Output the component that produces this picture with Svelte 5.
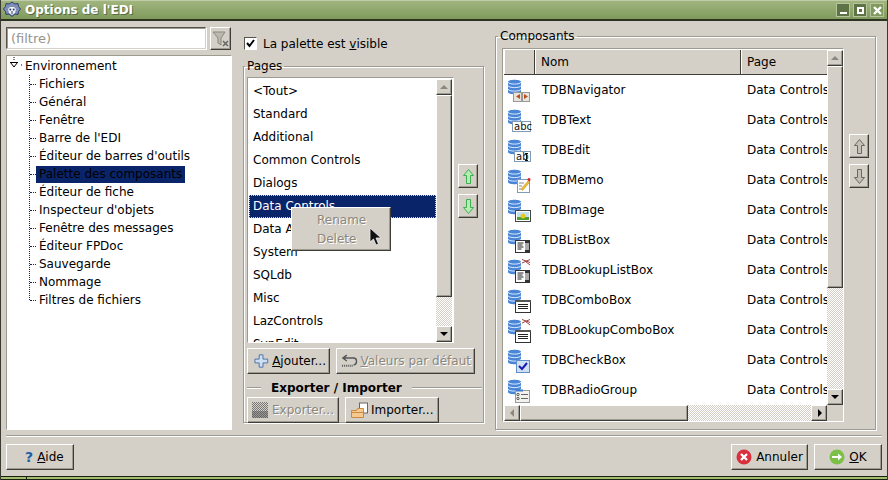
<script>
	const treeItems = [
		'Fichiers', 'Général', 'Fenêtre', "Barre de l'EDI", "Éditeur de barres d'outils",
		'Palette des composants', 'Éditeur de fiche', "Inspecteur d'objets",
		'Fenêtre des messages', 'Éditeur FPDoc', 'Sauvegarde', 'Nommage', 'Filtres de fichiers'
	];
	const selectedTree = 'Palette des composants';
	const pages = [
		'<Tout>', 'Standard', 'Additional', 'Common Controls', 'Dialogs', 'Data Controls',
		'Data Access', 'System', 'SQLdb', 'Misc', 'LazControls', 'SynEdit'
	];
	const components = [
		['TDBNavigator', 'nav'], ['TDBText', 'text'], ['TDBEdit', 'edit'], ['TDBMemo', 'memo'],
		['TDBImage', 'image'], ['TDBListBox', 'list'], ['TDBLookupListBox', 'lookuplist'],
		['TDBComboBox', 'combo'], ['TDBLookupComboBox', 'lookupcombo'], ['TDBCheckBox', 'check'],
		['TDBRadioGroup', 'radio']
	];
</script>

{#snippet arrow(dir, color, stroke)}
	<svg width="13" height="17" viewBox="0 0 13 17" class:flip={dir === 'down'}>
		<path d="M6.5 1.500 L11.500 7.500 H8.500 V15.500 H4.500 V7.500 H1.500 Z" fill={color} stroke={stroke} />
	</svg>
{/snippet}

{#snippet lines()}
	<rect x="6.500" y="12.500" width="15" height="12" fill="#fff" stroke="#333" />
	<path d="M6 12h16v2H6z" fill="#555" />
	<path d="M9 16.500h10M9 18.500h10M9 20.500h10" stroke="#222" />
{/snippet}

{#snippet lookup()}
	<path d="M13 1.500l8 3M13 5l8-3.500M16 3l5 4" stroke="#a04040" fill="none" />
{/snippet}

{#snippet dbIcon(kind)}
	<svg width="26" height="26" viewBox="0 0 26 26" class="cicon">
		<path d="M1 5c0-3 13-3 13 0v10c0 3-13 3-13 0z" fill="#4a86d8" />
		<path d="M1 5c0 2.800 13 2.800 13 0M1 8.500c0 2.800 13 2.800 13 0M1 12c0 2.800 13 2.800 13 0" stroke="#dfeaf8" fill="none" />
		<g transform="translate(2 1)">
			{#if kind === 'nav'}
				<rect x="4.500" y="14.500" width="8" height="9" fill="#e8e4dc" stroke="#999" />
				<rect x="13.500" y="14.500" width="7" height="9" fill="#e8e4dc" stroke="#999" />
				<path d="M11 16v5l-4-2.500z" fill="#b5521f" />
				<path d="M15 16v5l4-2.500z" fill="#b5521f" />
			{:else if kind === 'text'}
				<rect x="3.500" y="13.500" width="18" height="10" fill="#fff" stroke="#7f9bb8" />
				<text x="5" y="22" class="mini">abc</text>
			{:else if kind === 'edit'}
				<rect x="5.500" y="13.500" width="16" height="10" fill="#fff" stroke="#7f9bb8" />
				<text x="7" y="22" class="mini">ab</text>
				<path d="M16 15.500h3M17.500 15.500v7M16 22.500h3" stroke="#111" fill="none" />
			{:else if kind === 'memo'}
				<rect x="8.500" y="11.500" width="12" height="13" fill="#fff" stroke="#7f9bb8" />
				<path d="M10 15h5M10 18h3M10 21h2" stroke="#888" />
				<path d="M12 21l7-8 1.500 1.500-7 8z" fill="#f0c030" stroke="#a88020" stroke-width=".5" />
				<circle cx="20" cy="11.500" r="1.500" fill="#e02020" />
			{:else if kind === 'image'}
				<rect x="6.500" y="12.500" width="15" height="11" fill="#fff" stroke="#444" />
				<rect x="8" y="14" width="12" height="5" fill="#bfe0f0" />
				<rect x="8" y="19" width="12" height="3" fill="#4ca030" />
				<circle cx="14" cy="18" r="2.500" fill="#e8c820" />
			{:else if kind === 'list' || kind === 'lookuplist'}
				<rect x="6.500" y="12.500" width="14" height="12" fill="#fff" stroke="#333" />
				<path d="M8.500 15h6M8.500 17h5M8.500 19h6M8.500 21h4" stroke="#222" />
				<rect x="16" y="13" width="4" height="11" fill="#aaa" />
				<path d="M16 13h4v2h-4zM16 22h4v2h-4z" fill="#333" />
				{#if kind === 'lookuplist'}{@render lookup()}{/if}
			{:else if kind === 'combo' || kind === 'lookupcombo'}
				{@render lines()}
				{#if kind === 'lookupcombo'}{@render lookup()}{/if}
			{:else if kind === 'check'}
				<rect x="7.500" y="12.500" width="13" height="12" fill="#cfe0f5" stroke="#5f8fc8" />
				<path d="M10 18l3 3 5-6" stroke="#1a1ab0" stroke-width="2" fill="none" />
			{:else if kind === 'radio'}
				<rect x="6.500" y="12.500" width="14" height="12" fill="#f4f2ee" stroke="#999" />
				<path d="M7 12.500h7" stroke="#3f78c8" stroke-width="2" />
				<circle cx="9" cy="16.500" r="1.200" fill="none" stroke="#555" />
				<circle cx="9" cy="20.500" r="1.200" fill="none" stroke="#555" />
				<path d="M12 16.500h7M12 20.500h7" stroke="#666" />
			{/if}
		</g>
	</svg>
{/snippet}

<div class="window">
	<header class="title">
		<svg width="18" height="18" viewBox="0 0 18 18" class="logo">
			<path d="M9 1l3 2 3-.5.500 3 2 2.500-2 2.500-.5 3-3-.5-3 2.500-3-2.500-3 .5-.5-3-2-2.500 2-2.500.5-3 3 .5z" fill="#7f8fb8" stroke="#2f3f6f" />
			<path d="M5 8l2-2h4l2 2-1 4-3 2-3-2z" fill="#eef1f7" />
			<circle cx="7.300" cy="8.500" r="1" fill="#2f3f6f" />
			<circle cx="10.700" cy="8.500" r="1" fill="#2f3f6f" />
			<path d="M9 10v3" stroke="#2f3f6f" />
		</svg>
		<span class="title-text">Options de l'EDI</span>
		<div class="win-buttons">
			<span class="win-btn"><i class="min"></i></span>
			<span class="win-btn"><i class="max"></i></span>
			<span class="win-btn close">
				<svg width="9" height="9" viewBox="0 0 9 9"><path d="M1 1l7 7M8 1L1 8" stroke="#fff" stroke-width="2.400" /></svg>
			</span>
		</div>
	</header>

	<main class="content">
		<section class="left">
			<div class="filter-row">
				<div class="filter-input">(filtre)</div>
				<button class="btn filter-btn" aria-label="Effacer le filtre">
					<svg width="18" height="18" viewBox="0 0 18 18">
						<path d="M1 2h12L9 8v7l-3-2V8z" fill="#bdb9b0" stroke="#8a877e" />
						<path d="M11 11l5 5M16 11l-5 5" stroke="#666" stroke-width="1.500" />
					</svg>
				</button>
			</div>
			<div class="tree sunken">
				<div class="tree-root">
					<svg width="14" height="14" viewBox="0 0 14 14" class="twist">
						<path d="M6 0v4" stroke="#000" stroke-dasharray="1 1" />
						<path d="M2 5.500h8M2.500 5.500L6 10l3.500-4.500" stroke="#000" fill="none" />
						<path d="M13 8h1" stroke="#000" />
					</svg>
					<span>Environnement</span>
				</div>
				<ul class="tree-list">
					{#each treeItems as item}
						<li class:sel={item === selectedTree}><span class="tree-label">{item}</span></li>
					{/each}
				</ul>
			</div>
		</section>

		<section class="middle">
			<label class="visible-row">
				<span class="check">
					<svg width="11" height="11" viewBox="0 0 11 11"><path d="M2 5l2.500 3L9 2" stroke="#000" stroke-width="2" fill="none" /></svg>
				</span>
				<span>La palette est <u>v</u>isible</span>
			</label>
			<fieldset class="group pages">
				<legend>Pages</legend>
				<div class="pages-top">
					<div class="list-box sunken">
						<ul class="page-list">
							{#each pages as p}
								<li class:sel={p === 'Data Controls'}>{p}</li>
							{/each}
						</ul>
						<div class="vbar list-bar">
							<div class="sb-btn up disabled"></div>
							<div class="sb-thumb"></div>
							<div class="sb-trough"></div>
							<div class="sb-btn down"></div>
						</div>
					</div>
					<div class="updown">
						<button class="btn arrow-btn" aria-label="Monter">{@render arrow('up', '#b4ecb4', '#3fae4f')}</button>
						<button class="btn arrow-btn" aria-label="Descendre">{@render arrow('down', '#b4ecb4', '#3fae4f')}</button>
					</div>
				</div>
				<div class="page-actions">
					<button class="btn action">
						<svg width="16" height="16" viewBox="0 0 16 16">
							<path d="M5.500 1.500h4v4.500h5v4h-5v4.500h-4v-4.500H1v-4h4.500z" fill="#cfe0f5" stroke="#4a6fa5" />
						</svg>
						<span><u>A</u>jouter...</span>
					</button>
					<button class="btn action disabled grow" disabled>
						<svg width="18" height="16" viewBox="0 0 18 16">
							<path d="M6 2L2 5l4 3M2 5h11c4 0 4 7 0 7" stroke="#555" fill="none" stroke-width="1.500" />
							<path d="M1 13h11" stroke="#555" stroke-dasharray="1 1" stroke-width="2" />
						</svg>
						<span><u>V</u>aleurs par défaut</span>
					</button>
				</div>
				<div class="divider">
					<i></i><strong>Exporter / Importer</strong><i></i>
				</div>
				<div class="page-actions">
					<button class="btn action export disabled" disabled>
						<svg width="16" height="16" viewBox="0 0 16 16">
							<defs>
								<pattern id="checker" width="2" height="2" patternUnits="userSpaceOnUse">
									<rect width="2" height="2" fill="#d4d0c8" /><rect width="1" height="1" fill="#777" /><rect x="1" y="1" width="1" height="1" fill="#777" />
								</pattern>
							</defs>
							<rect width="16" height="16" fill="url(#checker)" />
							<rect y="9" width="16" height="7" fill="#555" opacity=".45" />
						</svg>
						<span>Exporter...</span>
					</button>
					<button class="btn action import">
						<svg width="18" height="17" viewBox="0 0 18 17">
							<rect x="9.500" y="1" width="8" height="10" fill="#fff" stroke="#666" />
							<path d="M1.500 8.500h5l1-2h6v9h-12z" fill="#f5c98f" stroke="#c98a3f" />
							<path d="M1.500 10.500h12" stroke="#c98a3f" />
						</svg>
						<span>Importer...</span>
					</button>
				</div>
			</fieldset>
		</section>

		<fieldset class="group composants">
			<legend>Composants</legend>
			<div class="comp-body">
				<div class="grid sunken">
					<div class="grid-main">
						<div class="grid-view">
							<div class="grid-head">
								<span class="h-icon"></span>
								<span class="h-nom">Nom</span>
								<span class="h-page">Page</span>
							</div>
							{#each components as [name, kind]}
								<div class="grid-row">
									<span class="c-icon">{@render dbIcon(kind)}</span>
									<span class="c-nom">{name}</span>
									<span class="c-page">Data Controls</span>
								</div>
							{/each}
						</div>
						<div class="vbar grid-bar">
							<div class="sb-btn up disabled"></div>
							<div class="sb-thumb"></div>
							<div class="sb-trough"></div>
							<div class="sb-btn down"></div>
						</div>
					</div>
					<div class="hbar">
						<div class="sb-btn left disabled"></div>
						<div class="sb-thumb"></div>
						<div class="sb-trough"></div>
						<div class="sb-btn right"></div>
						<div class="corner"></div>
					</div>
				</div>
				<div class="updown grey">
					<button class="btn arrow-btn" aria-label="Monter">{@render arrow('up', '#c4c0b8', '#6a6860')}</button>
					<button class="btn arrow-btn" aria-label="Descendre">{@render arrow('down', '#c4c0b8', '#6a6860')}</button>
				</div>
			</div>
		</fieldset>
	</main>

	<div class="separator"></div>

	<footer class="footer">
		<button class="btn foot help">
			<span class="qmark">?</span>
			<span><u>A</u>ide</span>
		</button>
		<div class="spacer"></div>
		<button class="btn foot cancel">
			<svg width="16" height="16" viewBox="0 0 16 16">
				<circle cx="8" cy="8" r="7.500" fill="#d8303c" />
				<path d="M5 5l6 6M11 5l-6 6" stroke="#fff" stroke-width="2.400" />
			</svg>
			<span>Annuler</span>
		</button>
		<button class="btn foot ok">
			<svg width="16" height="16" viewBox="0 0 16 16">
				<circle cx="8" cy="8" r="7.500" fill="#7cc048" />
				<path d="M3 7h6V4.500L13 8l-4 3.500V9H3z" fill="#fff" />
			</svg>
			<span><u>O</u>K</span>
		</button>
	</footer>

	<div class="statusline"><i></i><i class="rest"></i></div>

	<div class="popup">
		<div>Rename</div>
		<div>Delete</div>
	</div>
	<svg class="cursor" width="14" height="20" viewBox="0 0 14 20">
		<path d="M1 1v14l3.500-3 2.500 6 2.500-1-2.500-6h5z" fill="#111" stroke="#eee" stroke-width=".8" />
	</svg>
</div>

<style>
	:global(body) {
		margin: 0;
		background: #d4d0c8;
	}

	.window {
		position: relative;
		width: 888px;
		height: 480px;
		box-sizing: border-box;
		display: flex;
		flex-direction: column;
		overflow: hidden;
		background: #d4d0c8;
		border-left: 1px solid #3a3a30;
		border-right: 1px solid #3a3a30;
		font: 12px "DejaVu Sans", sans-serif;
		color: #000;
	}

	ul {
		list-style: none;
		margin: 0;
		padding: 0;
	}

	button {
		font: inherit;
		color: inherit;
		margin: 0;
	}

	.title {
		height: 21px;
		flex: none;
		box-sizing: border-box;
		display: flex;
		align-items: center;
		padding: 0 3px 0 2px;
		gap: 4px;
		background: linear-gradient(#a0b57d, #7f9a5c);
		border-bottom: 2px solid #2c3320;
		border-top: 1px solid #c0cca8;
	}

	.title-text {
		font-weight: bold;
		color: #fff;
		text-shadow: 1px 1px 0 #5a6b42;
	}

	.win-buttons {
		margin-left: auto;
		display: flex;
		gap: 3px;
	}

	.win-btn {
		width: 14px;
		height: 14px;
		box-sizing: border-box;
		display: flex;
		align-items: center;
		justify-content: center;
		background: #5d7345;
		border: 1px solid #b5c49c;
	}

	.win-btn.close {
		background: #7f9a5c;
	}

	.min {
		display: block;
		width: 7px;
		height: 2px;
		background: #fff;
		margin-top: 6px;
	}

	.max {
		display: block;
		width: 7px;
		height: 7px;
		box-sizing: border-box;
		border: 2px solid #fff;
	}

	.content {
		height: 409px;
		flex: none;
		display: flex;
		padding: 6px 0 0 5px;
		box-sizing: border-box;
	}

	.left {
		width: 226px;
		flex: none;
		display: flex;
		flex-direction: column;
		gap: 5px;
	}

	.filter-row {
		display: flex;
		gap: 4px;
		height: 23px;
	}

	.filter-input {
		width: 200px;
		box-sizing: border-box;
		height: 22px;
		background: #fff;
		border: 1px solid;
		border-color: #55534c #d4d0c8 #d4d0c8 #55534c;
		box-shadow: inset 1px 1px 0 #9d9a8f, 1px 1px 0 #fff;
		padding: 3px 4px;
		color: #96948c;
		font-size: 13px;
		line-height: 15px;
	}

	.btn {
		box-sizing: border-box;
		background: #d4d0c8;
		border: 1px solid;
		border-color: #fff #3f3d38 #3f3d38 #fff;
		box-shadow: inset -1px -1px 0 #9d9a8f;
		padding: 0;
		display: flex;
		align-items: center;
		justify-content: center;
	}

	.filter-btn {
		width: 21px;
		height: 23px;
	}

	.sunken {
		box-sizing: border-box;
		border: 1px solid;
		border-color: #9d9a8f #fff #fff #9d9a8f;
		box-shadow: inset 1px 1px 0 #fff;
		background: #fff;
	}

	.tree {
		width: 226px;
		height: 376px;
		padding: 1px 0 0 1px;
	}

	.tree-root {
		height: 18px;
		display: flex;
		gap: 3px;
	}

	.twist {
		flex: none;
	}

	.tree-root span {
		line-height: 19px;
	}

	.tree-list {
		margin-left: 21px;
		border-left: 1px dotted #0a246a;
		height: 225px;
	}

	.tree-list li {
		height: 18px;
		display: flex;
		align-items: center;
		white-space: nowrap;
		padding-left: 6px;
	}

	.tree-list li::before {
		content: "";
		width: 6px;
		margin-left: -6px;
		border-top: 1px dotted #0a246a;
		flex: none;
	}

	.tree-label {
		padding: 0 3px;
		line-height: 17px;
		height: 17px;
	}

	.tree-list li.sel .tree-label {
		background: #0a246a;
		width: 143px;
	}

	.middle {
		width: 241px;
		flex: none;
		margin-left: 11px;
		display: flex;
		flex-direction: column;
	}

	.visible-row {
		height: 32px;
		display: flex;
		align-items: flex-start;
		gap: 6px;
		padding: 10px 0 0 1px;
		box-sizing: border-box;
		line-height: 15px;
	}

	.check {
		width: 13px;
		height: 13px;
		box-sizing: border-box;
		background: #fff;
		border: 1px solid;
		border-color: #55534c #fff #fff #55534c;
		display: flex;
		align-items: center;
		justify-content: center;
	}

	.group {
		margin: 0;
		padding: 0;
		border: 1px solid #9d9a8f;
		box-shadow: inset 1px 1px 0 #fff, 1px 1px 0 #fff;
		box-sizing: border-box;
		min-width: 0;
	}

	legend {
		padding: 0 2px;
		line-height: 14px;
	}

	.pages {
		width: 241px;
		height: 364px;
		padding: 4px 0 0 3px;
	}

	.pages legend {
		margin-left: -2px;
	}

	.pages-top {
		display: flex;
		gap: 4px;
		height: 266px;
	}

	.list-box {
		width: 207px;
		height: 266px;
		flex: none;
		display: flex;
		overflow: hidden;
		padding: 1px 1px 0 1px;
	}

	.page-list {
		width: 187px;
		flex: none;
		overflow: hidden;
		padding-top: 1px;
	}

	.page-list li {
		height: 23px;
		line-height: 22px;
		padding-left: 4px;
		white-space: nowrap;
	}

	.page-list li.sel {
		background: #0a246a;
		color: #fff;
		outline: 1px dotted #d4d0c8;
		outline-offset: -1px;
	}

	.vbar {
		display: flex;
		flex-direction: column;
		flex: none;
		width: 16px;
	}

	.sb-btn {
		flex: none;
		width: 16px;
		height: 16px;
		box-sizing: border-box;
		background: #d4d0c8;
		border: 1px solid;
		border-color: #fff #3f3d38 #3f3d38 #fff;
		box-shadow: inset -1px -1px 0 #9d9a8f;
		position: relative;
	}

	.sb-btn::after {
		content: "";
		position: absolute;
		left: 3px;
		top: 5px;
		border: 4px solid transparent;
		border-top: 0;
		border-bottom: 4px solid #000;
	}

	.sb-btn.disabled::after {
		border-bottom-color: #8a877e;
	}

	.sb-btn.down::after {
		border-bottom: 0;
		border-top: 4px solid #000;
	}

	.sb-btn.left::after {
		left: 5px;
		top: 3px;
		border: 4px solid transparent;
		border-left: 0;
		border-right: 4px solid #8a877e;
	}

	.sb-btn.right::after {
		left: 6px;
		top: 3px;
		border: 4px solid transparent;
		border-right: 0;
		border-left: 4px solid #000;
	}

	.sb-thumb {
		box-sizing: border-box;
		background: #d4d0c8;
		border: 1px solid;
		border-color: #fff #3f3d38 #3f3d38 #fff;
		box-shadow: inset -1px -1px 0 #9d9a8f;
		flex: none;
	}

	.sb-trough {
		flex: 1;
		background: repeating-conic-gradient(#fff 0 25%, #d4d0c8 0 50%) 0 0 / 2px 2px;
	}

	.list-bar .sb-thumb {
		height: 202px;
	}

	.updown {
		display: flex;
		flex-direction: column;
		flex: none;
		gap: 6px;
		padding-top: 87px;
	}

	.arrow-btn {
		width: 20px;
		height: 24px;
	}

	.flip {
		transform: scaleY(-1);
	}

	.page-actions {
		display: flex;
		gap: 6px;
		margin-top: 5px;
		width: 228px;
	}

	.action {
		height: 26px;
		gap: 3px;
		white-space: nowrap;
		padding: 0 3px 0 6px;
		justify-content: flex-start;
	}

	.action.grow {
		width: 139px;
		flex: none;
		padding-left: 4px;
		gap: 2px;
	}

	.action:first-child {
		width: 83px;
		flex: none;
	}

	.action.export {
		width: 92px;
		gap: 4px;
		padding-left: 4px;
	}

	.import {
		width: 94px;
		flex: none;
	}

	.action.import {
		padding-left: 4px;
	}

	.disabled {
		color: #8a877e;
	}

	.btn.disabled span {
		text-shadow: 1px 1px 0 #fff;
	}

	.divider {
		display: flex;
		align-items: center;
		gap: 10px;
		height: 16px;
		margin-top: 6px;
		width: 235px;
	}

	.divider i {
		height: 0;
		border-top: 1px solid #9d9a8f;
		border-bottom: 1px solid #fff;
	}

	.divider i:first-child {
		width: 14px;
		flex: none;
	}

	.divider i:last-child {
		flex: 1;
	}

	.divider strong {
		white-space: nowrap;
	}

	.divider + .page-actions {
		margin-top: 1px;
	}

	.composants {
		margin-left: 11px;
		width: 381px;
		height: 401px;
		flex: none;
		margin-top: 2px;
		padding: 0 5px 0 6px;
	}

	.composants legend {
		margin-left: -4px;
	}

	.comp-body {
		display: flex;
		gap: 5px;
		padding-top: 5px;
	}

	.grid {
		width: 342px;
		height: 374px;
		display: flex;
		flex-direction: column;
		padding: 1px 0 0 1px;
		background: #d4d0c8;
	}

	.grid-main {
		display: flex;
		height: 355px;
	}

	.grid-view {
		width: 323px;
		overflow: hidden;
		background: #fff;
	}

	.grid-head {
		display: flex;
		height: 25px;
		background: #d4d0c8;
		border-bottom: 1px solid #3f3d38;
		box-sizing: border-box;
	}

	.grid-head span {
		box-sizing: border-box;
		border-right: 1px solid #3f3d38;
		border-left: 1px solid #fff;
		padding-left: 5px;
		line-height: 24px;
		flex: none;
	}

	.h-icon {
		width: 31px;
	}

	.h-nom {
		width: 206px;
	}

	.grid-head .h-page {
		width: 86px;
		border-right: 0;
	}

	.grid-row {
		display: flex;
		align-items: center;
		height: 30px;
		white-space: nowrap;
	}

	.c-icon {
		width: 31px;
		flex: none;
		display: flex;
		padding-left: 3px;
		box-sizing: border-box;
	}

	.cicon {
		flex: none;
	}

	.mini {
		font: 10px "DejaVu Sans", sans-serif;
		fill: #111;
	}

	.c-nom {
		width: 206px;
		flex: none;
		padding-left: 7px;
		box-sizing: border-box;
	}

	.c-page {
		width: 86px;
		flex: none;
		padding-left: 6px;
		box-sizing: border-box;
	}

	.grid-bar .sb-thumb {
		height: 222px;
	}

	.hbar {
		display: flex;
		height: 16px;
		flex: none;
		background: #d4d0c8;
	}

	.hbar .sb-thumb {
		width: 168px;
	}

	.corner {
		width: 16px;
		flex: none;
		background: #d4d0c8;
	}

	.updown.grey {
		padding-top: 86px;
	}

	.separator {
		height: 0;
		margin: 5px 5px 0;
		border-top: 1px solid #9d9a8f;
		border-bottom: 1px solid #fff;
		flex: none;
	}

	.footer {
		display: flex;
		gap: 6px;
		padding: 7px 5px 0 5px;
		height: 26px;
		flex: none;
	}

	.spacer {
		flex: 1;
	}

	.foot {
		height: 26px;
		gap: 4px;
	}

	.help {
		width: 68px;
		justify-content: flex-start;
		padding-left: 18px;
	}

	.qmark {
		color: #1f5fa5;
		font-weight: bold;
		font-size: 14px;
	}

	.cancel {
		width: 77px;
	}

	.ok {
		width: 68px;
	}

	.statusline {
		position: absolute;
		left: 0;
		right: 0;
		bottom: 0;
		height: 4px;
		display: flex;
		gap: 1px;
		background: #1a1f10;
		border-top: 1px solid #1a1f10;
		box-sizing: border-box;
	}

	.statusline i {
		width: 25px;
		background: #a0c070;
		margin-bottom: 1px;
	}

	.statusline .rest {
		width: auto;
		flex: 1;
	}

	.popup {
		position: absolute;
		left: 290px;
		top: 207px;
		width: 100px;
		height: 44px;
		box-sizing: border-box;
		background: #d4d0c8;
		border: 1px solid;
		border-color: #fff #3f3d38 #3f3d38 #fff;
		box-shadow: inset -1px -1px 0 #9d9a8f;
		padding: 3px 0 0 25px;
		color: #8a877e;
		text-shadow: 1px 1px 0 #fff;
	}

	.popup div {
		height: 19px;
		line-height: 19px;
	}

	.cursor {
		position: absolute;
		left: 368px;
		top: 227px;
	}
</style>
